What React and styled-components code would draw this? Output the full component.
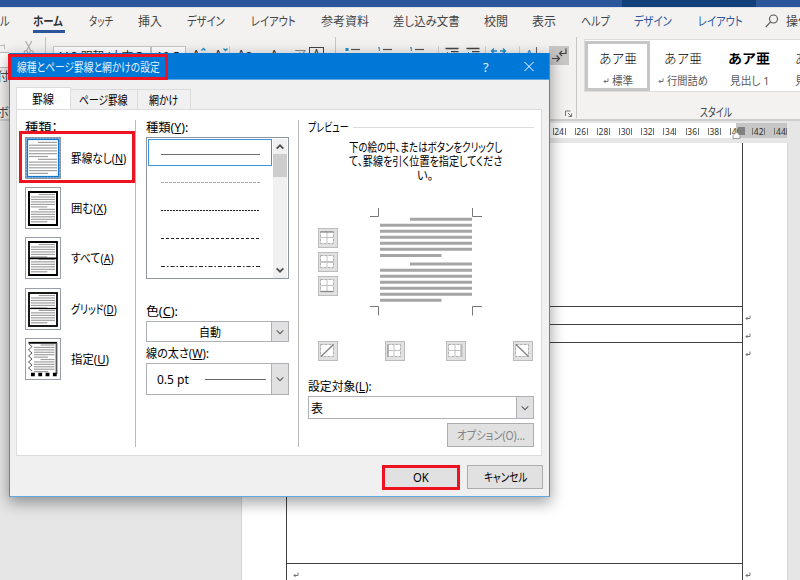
import React, { useLayoutEffect, useRef, useState } from "react";
import styled, { createGlobalStyle, css } from "styled-components";

const GlobalStyle = createGlobalStyle`
  * { box-sizing: border-box; }
  body { margin: 0; overflow: hidden; }
`;

const jp = `"Noto Sans", "Noto Sans CJK JP", sans-serif`;

/* ---------- text that is condensed to a given width ---------- */

const FitBox = styled.span`
  display: block;
  flex: none;
  width: ${(p) => p.$w}px;
  white-space: nowrap;
`;
const FitInner = styled.span`
  display: inline-block;
  transform-origin: 0 50%;
`;

function Fit({ w, children }) {
  const ref = useRef(null);
  const [scale, setScale] = useState(1);
  useLayoutEffect(() => {
    if (ref.current) setScale(w / ref.current.offsetWidth);
  }, [w]);
  return (
    <FitBox $w={w}>
      <FitInner ref={ref} style={{ transform: `scaleX(${scale})` }}>
        {children}
      </FitInner>
    </FitBox>
  );
}

/* ---------- application window ---------- */

const Screen = styled.div`
  position: relative;
  width: 800px;
  height: 580px;
  overflow: hidden;
  display: flex;
  flex-direction: column;
  background: #e6e6e6;
  color: #262626;
  font-family: ${jp};
  font-feature-settings: "palt";
  font-size: 12px;
`;

const WindowBar = styled.div`
  flex: none;
  height: 7px;
  background: #2b579a;
  display: grid;
  grid-template-columns: 622px 134px 1fr;
`;
const ContextBar = styled.div`
  grid-column: 2;
  background: #124078;
`;

const RibbonTabs = styled.nav`
  flex: none;
  height: 30px;
  background: #f3f2f1;
  border-top: 1px solid #dfe3ea;
  display: grid;
  grid-template-columns: 33px 56px 49px 49px 64px 70px 72px 91px 48px 49px 53px 64px 67px 21px 30px;
`;
const RibbonTab = styled.div`
  height: 25px;
  width: max-content;
  line-height: 27px;
  font-size: 12.5px;
  color: ${(p) => (p.$blue ? "#2b579a" : "#444")};
  ${(p) =>
    p.$active &&
    css`
      font-weight: 700;
      color: #333;
      border-bottom: 3px solid #2b579a;
      padding-right: 2px;
    `}
`;
const SearchSlot = styled.div`
  padding-top: 6px;
`;

const Ribbon = styled.div`
  flex: none;
  height: 84px;
  background: #f3f2f1;
  border-bottom: 2px solid #cdcdcd;
  display: grid;
  grid-template-columns: 46px 290px 241px 1fr;
`;
const Group = styled.section`
  height: 81px;
  border-right: ${(p) => (p.$last ? 0 : 1)}px solid #c8c6c4;
  overflow: hidden;
`;
const ClipboardGroup = styled(Group)`
  display: grid;
  grid-template-columns: 10px 1fr;
  padding-top: 2px;
`;
const PasteColumn = styled.div`
  overflow: hidden;
  font-size: 12px;
  color: #444;
`;
const PasteIcon = styled.div`
  height: 29px;
  padding-top: 5px;
`;
const PasteText = styled.div`
  height: 36px;
  line-height: 18px;
  margin-left: -3px;
  white-space: nowrap;
`;
const ScissorSlot = styled.div`
  padding: 1px 0 0 13px;
`;

const ToolRow = styled.div`
  display: flex;
  align-items: flex-start;
  padding: 9px 0 0 ${(p) => p.$pl}px;
  height: 40px;
`;
const Combo = styled.div`
  flex: none;
  width: ${(p) => p.$w}px;
  height: 22px;
  margin-right: ${(p) => p.$mr || 0}px;
  padding-left: 4px;
  line-height: 20px;
  border: 1px solid #c8c6c4;
  background: #fff;
  overflow: hidden;
  white-space: nowrap;
  font-size: 12px;
`;
const Tool = styled.div`
  flex: none;
  width: ${(p) => p.$w}px;
  height: 22px;
  line-height: 17px;
  font-size: 13px;
  color: ${(p) => p.$c || "#333"};
  display: flex;
  gap: 1px;
`;
const BoxedA = styled.div`
  flex: none;
  width: 15px;
  height: 15px;
  margin-top: 1px;
  border: 1.5px solid #444;
  text-align: center;
  font-size: 10px;
  line-height: 11px;
`;
const ToolDivider = styled.div`
  flex: none;
  width: 1px;
  height: 20px;
  background: #d0cecc;
`;
const MarksButton = styled.div`
  flex: none;
  width: 20px;
  height: 19px;
  background: #c8c6c4;
`;
const LauncherSlot = styled.div`
  display: flex;
  justify-content: flex-end;
  padding: 33px 3px 0 0;
`;

const StylesGroup = styled(Group)`
  padding: 2px 0 0 7px;
`;
const Gallery = styled.div`
  height: 53px;
  background: #fff;
  border: 1px solid #dcdcdc;
  border-right: 0;
  display: grid;
  grid-template-columns: 65px 66px 66px 40px;
  padding-top: 1px;
`;
const StyleCard = styled.div`
  height: 50px;
  border: 3px solid ${(p) => (p.$on ? "#c6c6c6" : "transparent")};
  display: flex;
  flex-direction: column;
  align-items: ${(p) => (p.$start ? "flex-start" : "center")};
  padding-left: ${(p) => (p.$start ? 10 : 0)}px;
`;
const Sample = styled.div`
  height: 25px;
  line-height: 28px;
  font-size: 13px;
  font-weight: ${(p) => (p.$bold ? 700 : 300)};
  font-feature-settings: normal;
  color: #000;
`;
const StyleName = styled.div`
  display: flex;
  align-items: center;
  gap: 3px;
  height: 20px;
  padding-top: 4px;
  font-size: 11px;
  line-height: 20px;
  color: #5a5a5a;
`;
const StylesLabel = styled.div`
  padding-left: 116px;
  height: 26px;
  line-height: 18px;
  padding-top: 12px;
  color: #444;
`;

const Workspace = styled.main`
  flex: 1;
  background: #e6e6e6;
`;
const RulerRow = styled.div`
  height: 22px;
  padding: 2px 13px 4px 242px;
`;
const Ruler = styled.div`
  position: relative;
  height: 15px;
  background: linear-gradient(90deg, #fff 494px, #c6c6c6 494px);
  display: flex;
  justify-content: flex-end;
`;
const RulerMark = styled.div`
  flex: none;
  width: 22.2px;
  display: flex;
  align-items: center;
  justify-content: center;
  padding-top: 1px;
  &:last-of-type {
    margin-right: -5px;
  }
`;
const RulerNumber = styled.span`
  width: 13px;
  height: 7px;
  line-height: 7px;
  border-left: 1px solid #777;
  border-right: 1px solid #777;
  font-size: 8.5px;
  text-align: center;
  color: #333;
`;
const IndentMarker = styled.svg`
  position: absolute;
  left: 490px;
  top: 3px;
`;
const Page = styled.div`
  height: 437px;
  margin-left: 241px;
  width: 547px;
  background: #fff;
  border: 1px solid #d4d4d4;
  border-top: 0;
  border-bottom: 0;
  padding: 0 0 0 44px;
`;
const DocRow = styled.div`
  display: flex;
  height: ${(p) => p.$h}px;
  line-height: 0;
`;
const DocCell = styled.div`
  width: 457px;
  border: 1px solid #404040;
  border-top: 0;
  border-bottom-width: ${(p) => (p.$open ? 0 : 1)}px;
  padding: ${(p) => p.$pt || 0}px 0 0 6px;
`;
const ReturnSlot = styled.div`
  padding: ${(p) => p.$pt}px 0 0 2px;
`;

/* ---------- dialog ---------- */

const Dialog = styled.div`
  position: absolute;
  left: 9px;
  top: 53px;
  width: 541px;
  height: 444px;
  border: 1px solid #3e8dcf;
  border-top: 0;
  border-bottom-color: #62a8e0;
  background: #f0f0f0;
  box-shadow: 0 5px 14px 1px rgba(0, 0, 0, 0.36);
  color: #000;
`;
const TitleBar = styled.header`
  height: 27px;
  background: #0078d7;
  border-bottom: 1px solid #5ba7e4;
  color: #e4f0fa;
  display: grid;
  grid-template-columns: 466px 41px 1fr;
  line-height: 30px;
  padding-left: 7px;
  font-size: 12px;
`;
const Help = styled.span`
  font-size: 13px;
  line-height: 28px;
`;
const TabStrip = styled.div`
  height: 29px;
  padding: 7px 0 0 6px;
  display: flex;
  align-items: flex-end;
`;
const DialogTab = styled.div`
  width: ${(p) => p.$w}px;
  height: ${(p) => (p.$on ? 22 : 20)}px;
  padding-left: ${(p) => p.$pl}px;
  line-height: ${(p) => (p.$on ? 24 : 21)}px;
  background: ${(p) => (p.$on ? "#fff" : "#f0f0f0")};
  border: 1px solid #dcdcdc;
  border-left-width: ${(p) => (p.$on ? 1 : 0)}px;
  border-bottom: 0;
`;
const Panel = styled.div`
  width: 526px;
  height: 347px;
  margin-left: 6px;
  background: #fff;
  border: 1px solid #dcdcdc;
  display: grid;
  grid-template-columns: 119px 163px 1fr;
`;
const Column = styled.div`
  height: 327px;
  margin-top: 10px;
  padding: 0 0 0 ${(p) => p.$pl}px;
  border-right: ${(p) => (p.$last ? "0" : "1px solid #b9b9b9")};
`;
const FieldLabel = styled.div`
  height: ${(p) => p.$h || 14}px;
  line-height: ${(p) => (p.$h || 14) + (p.$dy ?? 2)}px;
`;
const ColorLabel = styled.div`
  height: 42px;
  padding-top: 24px;
  line-height: 18px;
`;
const PresetList = styled.div`
  margin-top: 3px;
  display: grid;
  grid-auto-rows: 42px;
  row-gap: 8.2px;
`;
const Preset = styled.div`
  display: flex;
  align-items: center;
  gap: 10px;
  line-height: 42px;
`;
const PresetName = styled.div`
  padding-top: 2px;
`;
const LineList = styled.div`
  width: 143px;
  height: 142px;
  margin-top: 3px;
  border: 1px solid #8f959e;
  display: grid;
  grid-template-columns: 125px 1fr;
  padding: 1px;
`;
const LineRows = styled.div`
  display: grid;
  grid-template-rows: repeat(5, 27.9px);
`;
const LineRow = styled.div`
  width: 124px;
  height: 27px;
  padding: 12px 0 0 12px;
  border: 1px solid ${(p) => (p.$on ? "#3b94dd" : "transparent")};
  line-height: 0;
`;
const ScrollBar = styled.div`
  background: #f0f0f0;
  display: flex;
  flex-direction: column;
  align-items: center;
`;
const Thumb = styled.div`
  width: 14px;
  height: 23px;
  background: #cdcdcd;
`;
const ScrollArrow = styled.div`
  height: 15px;
  padding-top: ${(p) => (p.$end ? 3 : 4)}px;
  line-height: 0;
  margin-top: ${(p) => (p.$end ? "auto" : 0)};
`;
const Select = styled.div`
  width: ${(p) => p.$w}px;
  height: ${(p) => p.$h}px;
  border: 1px solid #adb0b5;
  background: #fff;
  display: flex;
  align-items: center;
  padding-left: ${(p) => p.$pl}px;
`;
const SelectButton = styled.div`
  width: 17px;
  align-self: stretch;
  margin-left: auto;
  background: #e1e1e1;
  border-left: 1px solid #adb0b5;
  display: flex;
  align-items: center;
  justify-content: center;
`;
const LineSample = styled.div`
  width: 61px;
  height: 1px;
  background: #666;
  margin-left: 16px;
`;
const PreviewHead = styled.div`
  display: flex;
  align-items: center;
  gap: 4px;
  height: 14px;
  line-height: 17px;
`;
const Rule = styled.div`
  width: 181px;
  height: 1px;
  background: #dcdcdc;
`;
const Hint = styled.div`
  height: 44px;
  width: 154px;
  margin: 7px 0 0 40px;
  line-height: 14.2px;
  display: flex;
  flex-direction: column;
  align-items: center;
`;
const PreviewArea = styled.div`
  display: grid;
  grid-template-columns: 52px 1fr;
  padding: 23px 0 0 10px;
  height: 156px;
`;
const SideButtons = styled.div`
  display: flex;
  flex-direction: column;
  gap: 4px;
  padding-top: 20px;
`;
const BottomButtons = styled.div`
  display: grid;
  grid-template-columns: 67px 61px 67px 22px;
  padding-left: 10px;
  height: 37px;
`;
const BorderButton = styled.div`
  width: 20px;
  height: 20px;
  border: 1px solid #bcbcbc;
  background: #e1e1e1;
  line-height: 0;
`;
const PushButton = styled.button`
  width: ${(p) => p.$w}px;
  height: ${(p) => p.$h}px;
  padding: 0;
  border: 1px solid #adadad;
  background: #e1e1e1;
  color: ${(p) => (p.$dim ? "#838383" : "#000")};
  font: inherit;
  font-feature-settings: inherit;
  display: flex;
  align-items: center;
  justify-content: center;
`;
const OptionSlot = styled.div`
  display: flex;
  margin: 4px 0 0 139px;
`;
const Footer = styled.footer`
  display: flex;
  gap: 8px;
  padding: 9px 0 0 373px;
`;
const Callout = styled.div`
  position: absolute;
  left: ${(p) => p.$x}px;
  top: ${(p) => p.$y}px;
  width: ${(p) => p.$w}px;
  height: ${(p) => p.$h}px;
  border: 3px solid #ed1320;
`;

/* ---------- drawings ---------- */

const ReturnMark = ({ s = 6 }) => (
  <svg width={s} height={s} viewBox="0 0 6 6" fill="none" stroke="#666" strokeWidth="0.9">
    <path d="M5 0.5V3.5H1M2.6 1.9L1 3.5L2.6 5.1" />
  </svg>
);

const Chevron = ({ up, w = 8, strong }) => (
  <svg width={w} height="8" viewBox="0 0 8 8" fill="none" stroke={strong ? "#505050" : "#606060"} strokeWidth={strong ? 1.9 : 1.1}>
    <path d={up ? "M0.7 5.6L4 2.3L7.3 5.6" : "M0.7 2.3L4 5.6L7.3 2.3"} />
  </svg>
);

const SizeCaret = ({ down }) => (
  <svg width="5" height="6" viewBox="0 0 5 6" fill="none" stroke="#1e8bcd" strokeWidth="1.3">
    <path d={down ? "M0.5 2.5L2.5 4.5L4.5 2.5" : "M0.5 4.5L2.5 2.5L4.5 4.5"} />
  </svg>
);

function TextLines({ x1, x2, y, pitch }) {
  return Array.from({ length: 12 }, (_, i) => (
    <line
      key={i}
      x1={i % 6 === 0 ? x1 + (x2 - x1) * 0.32 : x1}
      x2={i % 6 === 5 ? x1 + (x2 - x1) * 0.68 : x2}
      y1={y + i * pitch}
      y2={y + i * pitch}
      stroke="#a0a0a0"
      strokeWidth="1.2"
    />
  ));
}

function PresetIcon({ kind }) {
  return (
    <svg width="36" height="42" viewBox="0 0 36 42" fill="none">
      <rect x="0.5" y="0.5" width="35" height="41" fill="#fff" stroke="#9a9eaa" />
      {kind === "none" && (
        <>
          <rect x="1" y="1" width="34" height="40" stroke="#8a8a8a" strokeDasharray="2 1" />
          <rect x="2.3" y="2.3" width="31.4" height="37.4" stroke="#0f78d0" strokeWidth="1.6" />
          <TextLines x1={4} x2={32} y={5.4} pitch={2.82} />
        </>
      )}
      {kind === "box" && (
        <>
          <TextLines x1={6} x2={30} y={7.5} pitch={2.48} />
          <rect x="4" y="5" width="28" height="33" stroke="#000" strokeWidth="2" />
        </>
      )}
      {kind === "all" && (
        <>
          <TextLines x1={6} x2={30} y={7.5} pitch={2.48} />
          <path d="M4 5H32V38H4ZM4 21.3H32" stroke="#000" strokeWidth="1.8" />
        </>
      )}
      {kind === "grid" && (
        <>
          <TextLines x1={6} x2={30} y={7.5} pitch={2.48} />
          <rect x="4" y="5" width="28" height="33" stroke="#000" strokeWidth="1.8" />
          <path d="M4 20.5H32" stroke="#000" strokeWidth="1.2" />
        </>
      )}
      {kind === "custom" && (
        <>
          <TextLines x1={9} x2={29.5} y={7} pitch={2.42} />
          <path d="M3.5 4.8H32" stroke="#000" strokeWidth="1.8" />
          <path d="M31.5 5V36" stroke="#555" strokeWidth="1.8" />
          <path d="M4 6L7 8.5L3.5 12L7 15L3.5 18L7 21L3.5 24L7 27L3.5 30L7 33" stroke="#444" strokeWidth="0.9" />
          <path d="M6 36.5H32" stroke="#000" strokeWidth="3.6" strokeDasharray="3.8 3.5" />
        </>
      )}
    </svg>
  );
}

const dashes = [
  { c: "#6f6f6f", w: 1.2 },
  { c: "#a8a8a8", d: "3 1", w: 1 },
  { c: "#222", d: "2 1", w: 1 },
  { c: "#222", d: "3 2", w: 1 },
  { c: "#222", d: "4 2 1.5 2", w: 1 },
];

function PreviewPicture() {
  const ys = [9, 15, 21, 27, 33, 39, 45.3, 53.7, 60, 66, 72, 78, 84, 90];
  return (
    <svg width="114" height="110" viewBox="370 208 114 110" fill="none">
      <path d="M370 216.5H378.5V208M482 216.5H472.5V208M370 306.5H378.5V315.5M482 306.5H472.5V315.5" stroke="#777" />
      {ys.map((y, i) => (
        <line
          key={y}
          x1={i % 7 === 0 ? 410 : 380}
          x2={i % 7 === 6 ? 441.5 : 472}
          y1={y + 210.2}
          y2={y + 210.2}
          stroke="#a5a5a5"
          strokeWidth="3"
        />
      ))}
    </svg>
  );
}

const borderGlyphs = {
  top: <path d="M1.5 3H14.5" stroke="#888" strokeWidth="1.3" />,
  middle: <path d="M1.5 9H14.5" stroke="#c4c4c4" strokeWidth="2" />,
  bottom: <path d="M1.5 14.5H14.5" stroke="#888" strokeWidth="1.3" />,
  left: <path d="M2 3V15" stroke="#999" strokeWidth="1.3" />,
  right: <path d="M14.4 2.5V15" stroke="#bbb" strokeWidth="2.2" />,
  up: <path d="M2 14.5L14.5 2.5" stroke="#808080" strokeWidth="1.3" />,
  down: <path d="M2 2.5L14.5 14.5" stroke="#808080" strokeWidth="1.3" />,
};

function BorderToggle({ kind }) {
  const diagonal = kind === "up" || kind === "down";
  return (
    <BorderButton>
      <svg width="18" height="18" viewBox="0 0 18 18" fill="none">
        <rect x="1.5" y="2.5" width="13" height="12" fill="#fff" stroke="#b0b0b0" strokeDasharray="3 1" />
        {!diagonal && <path d="M8 3V14M2 8.5H14" stroke="#c0c0c0" />}
        {borderGlyphs[kind]}
      </svg>
    </BorderButton>
  );
}

const ListGlyph = ({ numbered }) => (
  <svg width="17" height="20" viewBox="0 0 17 20" fill="none">
    {numbered ? <path d="M1 2L2.3 1.4V5" stroke="#1e8bcd" /> : <rect x="0.5" y="2" width="3" height="3" fill="#1e8bcd" />}
    <path d="M6 3.5H15" stroke="#555" strokeWidth="1.2" />
  </svg>
);

const IndentGlyph = () => (
  <svg width="14" height="20" viewBox="0 0 14 20" fill="none">
    <path d="M0.5 2.5H13.5M6 5.7H13.5" stroke="#444" strokeWidth="1.3" />
    <path d="M1 8L3 6" stroke="#1e8bcd" />
  </svg>
);

/* ---------- content ---------- */

const tabs = [
  ["ル", 10],
  ["ホーム", 30, "active"],
  ["タッチ", 24],
  ["挿入", 24],
  ["デザイン", 38],
  ["レイアウト", 45],
  ["参考資料", 48],
  ["差し込み文書", 67],
  ["校閲", 24],
  ["表示", 24],
  ["ヘルプ", 29],
  ["デザイン", 38, "blue"],
  ["レイアウト", 45, "blue"],
];

const presets = [
  ["none", "罫線なし", "N", 55],
  ["box", "囲む", "X", 36],
  ["all", "すべて", "A", 43],
  ["grid", "グリッド", "D", 46],
  ["custom", "指定", "U", 38],
];

const rulerNumbers = [24, 26, 28, 30, 32, 34, 36, 38, 40, 42, 44];

export default function App() {
  return (
    <Screen>
      <GlobalStyle />
      <WindowBar>
        <ContextBar />
      </WindowBar>
      <RibbonTabs>
        {tabs.map(([name, w, mode], i) => (
          <RibbonTab key={i} $active={mode === "active"} $blue={mode === "blue"}>
            <Fit w={w}>{name}</Fit>
          </RibbonTab>
        ))}
        <SearchSlot>
          <svg width="14" height="15" viewBox="0 0 14 15" fill="none" stroke="#555" strokeWidth="1.1">
            <circle cx="8.5" cy="5" r="4" />
            <path d="M5.6 7.9L0.8 13" />
          </svg>
        </SearchSlot>
        <RibbonTab>
          <Fit w={24}>操作</Fit>
        </RibbonTab>
      </RibbonTabs>

      <Ribbon>
        <ClipboardGroup>
          <PasteColumn>
            <PasteIcon>
              <svg width="9" height="24" viewBox="0 0 9 24" fill="none" stroke="#bbb">
                <path d="M0 1.5H5M4.5 0V5" />
                <rect x="-4" y="8.5" width="13" height="15" fill="#fff" />
              </svg>
            </PasteIcon>
            <PasteText>付け</PasteText>
            <PasteText>ボ</PasteText>
          </PasteColumn>
          <ScissorSlot>
            <svg width="12" height="18" viewBox="0 0 12 18" fill="none" stroke="#aaa" strokeWidth="1.1">
              <path d="M2.5 1L8 11M8.8 1L3.5 11" />
              <circle cx="3" cy="12.5" r="1.8" />
              <circle cx="8.5" cy="12.5" r="1.8" />
            </svg>
          </ScissorSlot>
        </ClipboardGroup>
        <Group>
          <ToolRow $pl={7}>
            <Combo $w={98}><Fit w={86}>ＭＳ 明朝 (本文の</Fit></Combo>
            <Combo $w={35} $mr={6}>10.5</Combo>
            <Tool $w={22}>A<SizeCaret /></Tool>
            <Tool $w={15}>A<SizeCaret down /></Tool>
            <ToolDivider />
            <Tool $w={7} />
            <Tool $w={33}>Aa</Tool>
            <Tool $w={24}>A</Tool>
            <Tool $w={15} $c="#888">ア</Tool>
            <BoxedA>A</BoxedA>
          </ToolRow>
        </Group>
        <Group>
          <ToolRow $pl={9}>
            <Tool $w={32}><ListGlyph /></Tool>
            <Tool $w={32}><ListGlyph numbered /></Tool>
            <Tool $w={29}><ListGlyph numbered /></Tool>
            <ToolDivider />
            <Tool $w={6} />
            <Tool $w={21}><IndentGlyph /></Tool>
            <Tool $w={19}><IndentGlyph /></Tool>
            <ToolDivider />
            <Tool $w={33}>
              <svg width="24" height="20" viewBox="0 0 24 20" fill="none" stroke="#1e8bcd" strokeWidth="1.3">
                <path d="M11 5H5.5M8 2.5L5.5 5L8 7.5M14 5H19.5M17 2.5L19.5 5L17 7.5" />
              </svg>
            </Tool>
            <ToolDivider />
            <Tool $w={5} />
            <Tool $w={24} $c="#1e8bcd">
              A
              <svg width="5" height="16" viewBox="0 0 5 16" fill="none" stroke="#666" strokeWidth="1.1">
                <path d="M2.5 1V14" />
              </svg>
            </Tool>
            <MarksButton>
              <svg width="20" height="19" viewBox="0 0 20 19" fill="none" stroke="#444" strokeWidth="1.2">
                <path d="M3 12.5H10.5M7.5 9.5L10.5 12.5L7.5 15.5M17 2.5V7.5H10.5M13 5L10.5 7.5L13 10" />
              </svg>
            </MarksButton>
          </ToolRow>
          <LauncherSlot>
            <svg width="8" height="8" viewBox="0 0 8 8" fill="none" stroke="#777">
              <path d="M0.5 6V1H5.5M3 3L6.5 6.5M6.5 3.5V6.5H3.5" />
            </svg>
          </LauncherSlot>
        </Group>
        <StylesGroup $last>
          <Gallery>
            <StyleCard $on>
              <Sample><Fit w={38}>あア亜</Fit></Sample>
              <StyleName><ReturnMark s={6} /><Fit w={21}>標準</Fit></StyleName>
            </StyleCard>
            <StyleCard>
              <Sample><Fit w={38}>あア亜</Fit></Sample>
              <StyleName><ReturnMark s={6} /><Fit w={41}>行間詰め</Fit></StyleName>
            </StyleCard>
            <StyleCard>
              <Sample $bold><Fit w={42}>あア亜</Fit></Sample>
              <StyleName><Fit w={39}>見出し 1</Fit></StyleName>
            </StyleCard>
            <StyleCard $start>
              <Sample><Fit w={38}>あア亜</Fit></Sample>
              <StyleName><Fit w={39}>見出し 2</Fit></StyleName>
            </StyleCard>
          </Gallery>
          <StylesLabel><Fit w={32}>スタイル</Fit></StylesLabel>
        </StylesGroup>
      </Ribbon>

      <Workspace>
        <RulerRow>
          <Ruler>
            {rulerNumbers.map((n) => (
              <RulerMark key={n}>
                <RulerNumber>{n}</RulerNumber>
              </RulerMark>
            ))}
            <IndentMarker width="14" height="14" viewBox="0 0 14 14">
              <rect x="6" y="1" width="7" height="8" fill="#808080" />
              <path d="M1 12.5V9.5L4.5 6L8 9.5V12.5Z" fill="#fff" stroke="#999" />
            </IndentMarker>
          </Ruler>
        </RulerRow>
        <Page>
          <DocRow $h={164}>
            <DocCell />
          </DocRow>
          <DocRow $h={18}>
            <DocCell />
            <ReturnSlot $pt={8}><ReturnMark s={6} /></ReturnSlot>
          </DocRow>
          <DocRow $h={18}>
            <DocCell />
            <ReturnSlot $pt={8}><ReturnMark s={6} /></ReturnSlot>
          </DocRow>
          <DocRow $h={221}>
            <DocCell />
            <ReturnSlot $pt={8}><ReturnMark s={6} /></ReturnSlot>
          </DocRow>
          <DocRow $h={16}>
            <DocCell $open $pt={8}><ReturnMark s={6} /></DocCell>
            <ReturnSlot $pt={8}><ReturnMark s={6} /></ReturnSlot>
          </DocRow>
        </Page>
      </Workspace>

      <Dialog>
        <TitleBar>
          <Fit w={143}>線種とページ罫線と網かけの設定</Fit>
          <Help>?</Help>
          <svg width="10" height="27" viewBox="0 0 10 27" fill="none" stroke="#fff" strokeWidth="1">
            <path d="M0.5 9L9.5 18M9.5 9L0.5 18" />
          </svg>
        </TitleBar>
        <TabStrip>
          <DialogTab $on $w={55} $pl={15}><Fit w={22}>罫線</Fit></DialogTab>
          <DialogTab $w={67} $pl={8}><Fit w={49}>ページ罫線</Fit></DialogTab>
          <DialogTab $w={53} $pl={11}><Fit w={29}>網かけ</Fit></DialogTab>
        </TabStrip>
        <Panel>
          <Column $pl={8}>
            <FieldLabel><Fit w={33}>種類：</Fit></FieldLabel>
            <PresetList>
              {presets.map(([kind, text, key, w]) => (
                <Preset key={kind}>
                  <PresetIcon kind={kind} />
                  <PresetName>
                    <Fit w={w}>{text}(<u>{key}</u>)</Fit>
                  </PresetName>
                </Preset>
              ))}
            </PresetList>
          </Column>
          <Column $pl={10}>
            <FieldLabel><Fit w={42}>種類(<u>Y</u>):</Fit></FieldLabel>
            <LineList>
              <LineRows>
                {dashes.map((d, i) => (
                  <LineRow key={i} $on={i === 0}>
                    <svg width="99" height="2">
                      <line x1="0" x2="99" y1="0.5" y2="0.5" stroke={d.c} strokeWidth={d.w} strokeDasharray={d.d} />
                    </svg>
                  </LineRow>
                ))}
              </LineRows>
              <ScrollBar>
                <ScrollArrow><Chevron up strong /></ScrollArrow>
                <Thumb />
                <ScrollArrow $end><Chevron strong /></ScrollArrow>
              </ScrollBar>
            </LineList>
            <ColorLabel><Fit w={32}>色(<u>C</u>):</Fit></ColorLabel>
            <Select $w={143} $h={21} $pl={52}>
              <Fit w={22}>自動</Fit>
              <SelectButton><Chevron /></SelectButton>
            </Select>
            <FieldLabel $h={21}><Fit w={63}>線の太さ(<u>W</u>):</Fit></FieldLabel>
            <Select $w={143} $h={32} $pl={10}>
              <Fit w={32}>0.5 pt</Fit>
              <LineSample />
              <SelectButton><Chevron /></SelectButton>
            </Select>
          </Column>
          <Column $last $pl={9}>
            <PreviewHead>
              <Fit w={41}>プレビュー</Fit>
              <Rule />
            </PreviewHead>
            <Hint>
              <Fit w={153}>下の絵の中、またはボタンをクリックし</Fit>
              <Fit w={153}>て、罫線を引く位置を指定してくださ</Fit>
              <Fit w={16}>い。</Fit>
            </Hint>
            <PreviewArea>
              <SideButtons>
                <BorderToggle kind="top" />
                <BorderToggle kind="middle" />
                <BorderToggle kind="bottom" />
              </SideButtons>
              <PreviewPicture />
            </PreviewArea>
            <BottomButtons>
              <BorderToggle kind="up" />
              <BorderToggle kind="left" />
              <BorderToggle kind="right" />
              <BorderToggle kind="down" />
            </BottomButtons>
            <FieldLabel $h={18} $dy={-1}><Fit w={64}>設定対象(<u>L</u>):</Fit></FieldLabel>
            <Select $w={226} $h={23} $pl={2}>
              <Fit w={12}>表</Fit>
              <SelectButton><Chevron /></SelectButton>
            </Select>
            <OptionSlot>
              <PushButton $w={87} $h={24} $dim><Fit w={68}>オプション(O)...</Fit></PushButton>
            </OptionSlot>
          </Column>
        </Panel>
        <Footer>
          <PushButton $w={76} $h={24}><Fit w={16}>OK</Fit></PushButton>
          <PushButton $w={76} $h={24}><Fit w={43}>キャンセル</Fit></PushButton>
        </Footer>
      </Dialog>

      <Callout $x={8} $y={54} $w={160} $h={26} />
      <Callout $x={19} $y={131} $w={116} $h={52} />
      <Callout $x={382} $y={465} $w={78} $h={25} />
    </Screen>
  );
}
